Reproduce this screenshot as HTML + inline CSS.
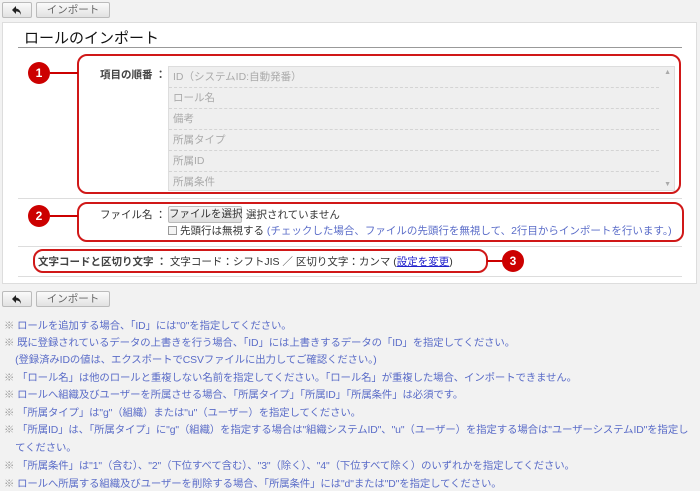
<!DOCTYPE html>
<html><head><meta charset="utf-8"><style>
*{margin:0;padding:0;box-sizing:border-box}
body{width:700px;height:491px;background:#f2f2f2;font-family:"Liberation Sans","Noto Sans CJK JP",sans-serif;font-size:10.5px;color:#333;position:relative;overflow:hidden}
.a{position:absolute;white-space:nowrap}
.btn{position:absolute;height:16px;border:1px solid #bbb;border-radius:2px;background:linear-gradient(#fafafa,#e2e2e2);font-size:10.5px;color:#666;text-align:center;line-height:14px;white-space:nowrap}
.panel{left:2px;top:22px;width:695px;height:262px;background:#fff;border:1px solid #ddd}
.red{border:2px solid #d01818;border-radius:10px}
.circ{width:22px;height:22px;border-radius:50%;background:#c00;color:#fff;font-weight:bold;font-size:12px;text-align:center;line-height:22px}
.ln{height:2px;background:#c00}
.list{left:168px;top:66px;width:507px;height:125px;background:#efefef;border:1px solid #ddd}
.row{height:21px;border-bottom:1px dashed #d4d4d4;color:#aaa;padding-left:4px;line-height:20px;width:490px}
.note{left:4px;color:#5a6cc8;font-size:10.4px;letter-spacing:-0.1px}
.note span{color:#999}
</style></head><body>
<div class="btn" style="left:2px;top:2px;width:30px"><svg width="12" height="11" viewBox="0 0 12 11" style="margin-top:2px"><path d="M5 1 L1 5 L5 9 L5 6.5 C8 6.5 9 7.5 10 10 C10 6 8 4 5 3.5 Z" fill="#222"/></svg></div>
<div class="btn" style="left:36px;top:2px;width:74px">インポート</div>
<div class="a panel"></div>
<div class="a" style="left:24px;top:27px;font-size:15px;color:#111">ロールのインポート</div>
<div class="a" style="left:18px;top:47px;width:664px;height:1px;background:#999"></div>

<div class="a red" style="left:77px;top:54px;width:604px;height:140px"></div>
<div class="a circ" style="left:28px;top:62px">1</div>
<div class="a ln" style="left:50px;top:72px;width:28px"></div>
<div class="a" style="left:100px;top:67px;font-weight:bold;color:#444">項目の順番 ：</div>
<div class="a list">
<div class="row">ID（システムID:自動発番）</div>
<div class="row">ロール名</div>
<div class="row">備考</div>
<div class="row">所属タイプ</div>
<div class="row">所属ID</div>
<div class="row" style="border:none">所属条件</div>
<div class="a" style="right:3px;top:2px;color:#aaa;font-size:7px">▲</div>
<div class="a" style="right:3px;bottom:2px;color:#aaa;font-size:7px">▼</div>
</div>
<div class="a" style="left:18px;top:198px;width:664px;height:1px;background:#ddd"></div>

<div class="a red" style="left:77px;top:202px;width:607px;height:40px"></div>
<div class="a circ" style="left:28px;top:205px">2</div>
<div class="a ln" style="left:50px;top:215px;width:28px"></div>
<div class="a" style="left:100px;top:207px;color:#333">ファイル名 ：</div>
<div class="btn" style="left:168px;top:206px;width:74px;height:17px;color:#333;background:linear-gradient(#f6f6f6,#ddd)">ファイルを選択</div>
<div class="a" style="left:246px;top:207px">選択されていません</div>
<div class="a" style="left:168px;top:226px;width:9px;height:9px;border:1px solid #999;background:#f4f4f4"></div>
<div class="a" style="left:180px;top:223px">先頭行は無視する <span style="color:#5a6cc8">(チェックした場合、ファイルの先頭行を無視して、2行目からインポートを行います。)</span></div>
<div class="a" style="left:18px;top:246px;width:664px;height:1px;background:#ddd"></div>

<div class="a red" style="left:33px;top:249px;width:455px;height:24px"></div>
<div class="a circ" style="left:502px;top:250px">3</div>
<div class="a ln" style="left:487px;top:260px;width:16px"></div>
<div class="a" style="left:38px;top:254px"><b style="font-weight:bold;color:#444">文字コードと区切り文字 ：</b> 文字コード：シフトJIS ／ 区切り文字：カンマ (<u style="color:#22c">設定を変更</u>)</div>
<div class="a" style="left:18px;top:276px;width:664px;height:1px;background:#ddd"></div>

<div class="btn" style="left:2px;top:291px;width:30px"><svg width="12" height="11" viewBox="0 0 12 11" style="margin-top:2px"><path d="M5 1 L1 5 L5 9 L5 6.5 C8 6.5 9 7.5 10 10 C10 6 8 4 5 3.5 Z" fill="#222"/></svg></div>
<div class="btn" style="left:36px;top:291px;width:74px">インポート</div>

<div class="a note" style="top:317px"><span>※</span> ロールを追加する場合、「ID」には"0"を指定してください。</div>
<div class="a note" style="top:334px"><span>※</span> 既に登録されているデータの上書きを行う場合、「ID」には上書きするデータの「ID」を指定してください。</div>
<div class="a note" style="top:351px">&nbsp;&nbsp;&nbsp;&nbsp;(登録済みIDの値は、エクスポートでCSVファイルに出力してご確認ください。)</div>
<div class="a note" style="top:369px"><span>※</span> 「ロール名」は他のロールと重複しない名前を指定してください。「ロール名」が重複した場合、インポートできません。</div>
<div class="a note" style="top:386px"><span>※</span> ロールへ組織及びユーザーを所属させる場合、「所属タイプ」「所属ID」「所属条件」は必須です。</div>
<div class="a note" style="top:404px"><span>※</span> 「所属タイプ」は"g"（組織）または"u"（ユーザー）を指定してください。</div>
<div class="a note" style="top:421px"><span>※</span> 「所属ID」は、「所属タイプ」に"g"（組織）を指定する場合は"組織システムID"、"u"（ユーザー）を指定する場合は"ユーザーシステムID"を指定し</div>
<div class="a note" style="top:439px">&nbsp;&nbsp;&nbsp;&nbsp;てください。</div>
<div class="a note" style="top:457px"><span>※</span> 「所属条件」は"1"（含む）、"2"（下位すべて含む）、"3"（除く）、"4"（下位すべて除く）のいずれかを指定してください。</div>
<div class="a note" style="top:475px"><span>※</span> ロールへ所属する組織及びユーザーを削除する場合、「所属条件」には"d"または"D"を指定してください。</div>
</body></html>
